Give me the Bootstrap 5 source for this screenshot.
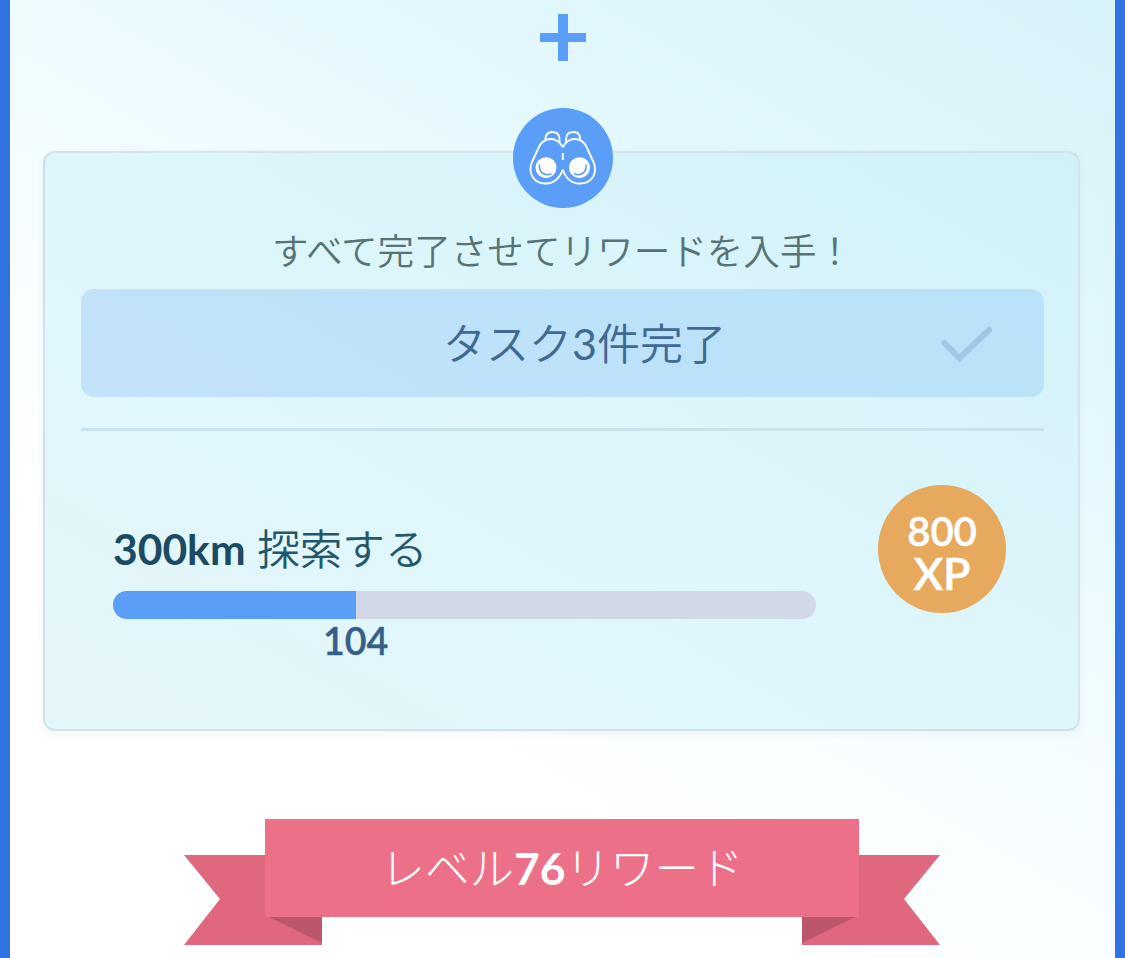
<!DOCTYPE html>
<html lang="ja">
<head>
<meta charset="utf-8">
<meta name="viewport" content="width=device-width, initial-scale=1">
<title>レベル76リワード</title>
<link href="https://cdn.jsdelivr.net/npm/bootstrap@5.3.0/dist/css/bootstrap.min.css" rel="stylesheet">
<style>
  body { font-family: Lato, "Noto Sans CJK JP", sans-serif; font-weight: 350; background: #3273e2; }
  b { font-weight: 700; }
  .screen { height: 958px; margin: 0 10px; background: linear-gradient(30deg, #fff 0%, #fff 28%, #f6fdff 48%, #eefbff 60%, #e3f8fd 74%, #d6f3f9 100%); }
  .plus-sign { height: 108px; padding-top: 14px; }
  .quest { margin: 43px 35px 0 33px; height: 580px; border: 2px solid rgba(200,208,214,.5); border-radius: 12px; padding: 0 34px 0 36px; background: linear-gradient(30deg, #e5f6fa 0%, #dff7fb 42%, #d8f4fa 75%, #d1f1f9 100%); box-shadow: 0 3px 9px rgba(80,70,110,.06); }
  .emblem { width: 100px; height: 100px; margin-top: -45px; background: #5a9ef8; }
  .intro { height: 81px; font-size: 36.6px; line-height: 87px; color: #587375; white-space: nowrap; }
  .done { height: 108px; border-radius: 13px; font-size: 43px; color: #416a92; background: linear-gradient(30deg, #c3e3f9, #bce2f9 60%, #b8e3fa); padding: 3px 51px 0 362px; }
  .rule { height: 3px; margin-top: 31px; background: #c8e3ea; }
  .goal { margin: 54px 38px 0 32px; }
  .meter { width: 703px; padding-top: 38px; }
  .goal-name { height: 68px; line-height: 52px; font-size: 42.6px; color: #245769; }
  .goal-name b { color: #1d4a63; }
  .progress { --bs-progress-height: 28px; --bs-progress-bg: #d2d8e6; --bs-progress-bar-bg: #5a9ef8; border-radius: 14px; }
  .count { font-size: 37.5px; line-height: 44px; color: #355f88; font-weight: 600; -webkit-text-stroke: .4px; }
  .xp { width: 128px; height: 128px; background: #e6a95d; font-size: 40px; font-weight: 600; line-height: 40px; padding-top: 26px; -webkit-text-stroke: .5px; }
  .xp .unit { font-size: 45px; line-height: 44px; }
  .reward { width: 758px; height: 126px; margin: 88px 0 0 173px; }
  .reward-title { height: 98px; line-height: 98px; font-size: 44.5px; font-weight: 300; }
</style>
</head>
<body>
<main class="screen overflow-hidden">
  <div class="plus-sign text-center">
    <svg class="d-block mx-auto" width="46" height="47" viewBox="0 0 46 47"><path fill="#5a9ef8" d="M18 0h10v19h18v9H28v19H18V28H0v-9h18z"/></svg>
  </div>
  <section class="quest">
    <div class="emblem rounded-circle mx-auto">
      <svg class="d-block" width="100" height="100" viewBox="0 0 100 100" fill="none" stroke="#fff" stroke-width="1.900" stroke-linejoin="round" stroke-linecap="round">
        <path d="M49.800 39C47 34 42 30.500 37 31c-6 .5-9.500 4-11.500 9l-6.500 14c-5 12 3 22 14 21.500C42 75.500 47 69 49.800 62 52.500 69 58 75.500 66.500 75.500c11 .5 19-9.500 14-21.500L74 40c-2-5-5.500-8.500-11.500-9C57.500 30.500 52.500 34 49.800 39z"/>
        <path d="M32.500 31.500c0-5 2.500-7.500 6.500-7.500s7.500 2 7.500 7v3M67.100 31.500c0-5-2.500-7.500-6.500-7.500s-7.500 2-7.500 7v3"/>
        <path stroke-linecap="butt" d="M49.800 45v7"/>
        <g fill="#fff" stroke="none"><circle cx="33" cy="59.700" r="10.500"/><circle cx="66.500" cy="59.700" r="10.500"/></g>
        <path stroke="#5a9ef8" stroke-width="1.500" d="M26.500 57c-1 8 6 11 11.500 9M73 57c1 8-6 11-11.500 9"/>
      </svg>
    </div>
    <div class="intro text-center">すべて完了させてリワードを入手！</div>
    <div class="done d-flex align-items-center justify-content-between">
      <span>タスク<span class="fw-normal">3</span>件完了</span>
      <svg width="52" height="36" viewBox="0 0 52 36" fill="none" stroke="#a0c7e3" stroke-width="6" stroke-linecap="round"><path d="M3.500 16l15 15L48 3"/></svg>
    </div>
    <div class="rule"></div>
    <div class="goal d-flex justify-content-between">
      <div class="meter">
        <div class="goal-name"><b>300km</b> 探索する</div>
        <div class="progress"><div class="progress-bar" style="width:34.6%"></div></div>
        <div class="count text-center" style="width:69%">104</div>
      </div>
      <div class="xp rounded-circle text-white text-center"><div>800</div><div class="unit">XP</div></div>
    </div>
  </section>
  <div class="reward position-relative">
    <svg class="position-absolute top-0 start-0" width="758" height="126" viewBox="0 0 758 126">
      <path fill="#df687f" d="M1 36h138v90H1l36-46zM757 36H619v90h138l-36-46z"/>
      <path fill="#bc566b" d="M86 98h53v26zM672 98h-53v26z"/>
      <path fill="#ed7089" d="M82 0h594v98H82z"/>
    </svg>
    <div class="reward-title position-relative text-white text-center">レベル<b>76</b>リワード</div>
  </div>
</main>
<script src="https://cdn.jsdelivr.net/npm/bootstrap@5.3.0/dist/js/bootstrap.bundle.min.js"></script>
</body>
</html>
